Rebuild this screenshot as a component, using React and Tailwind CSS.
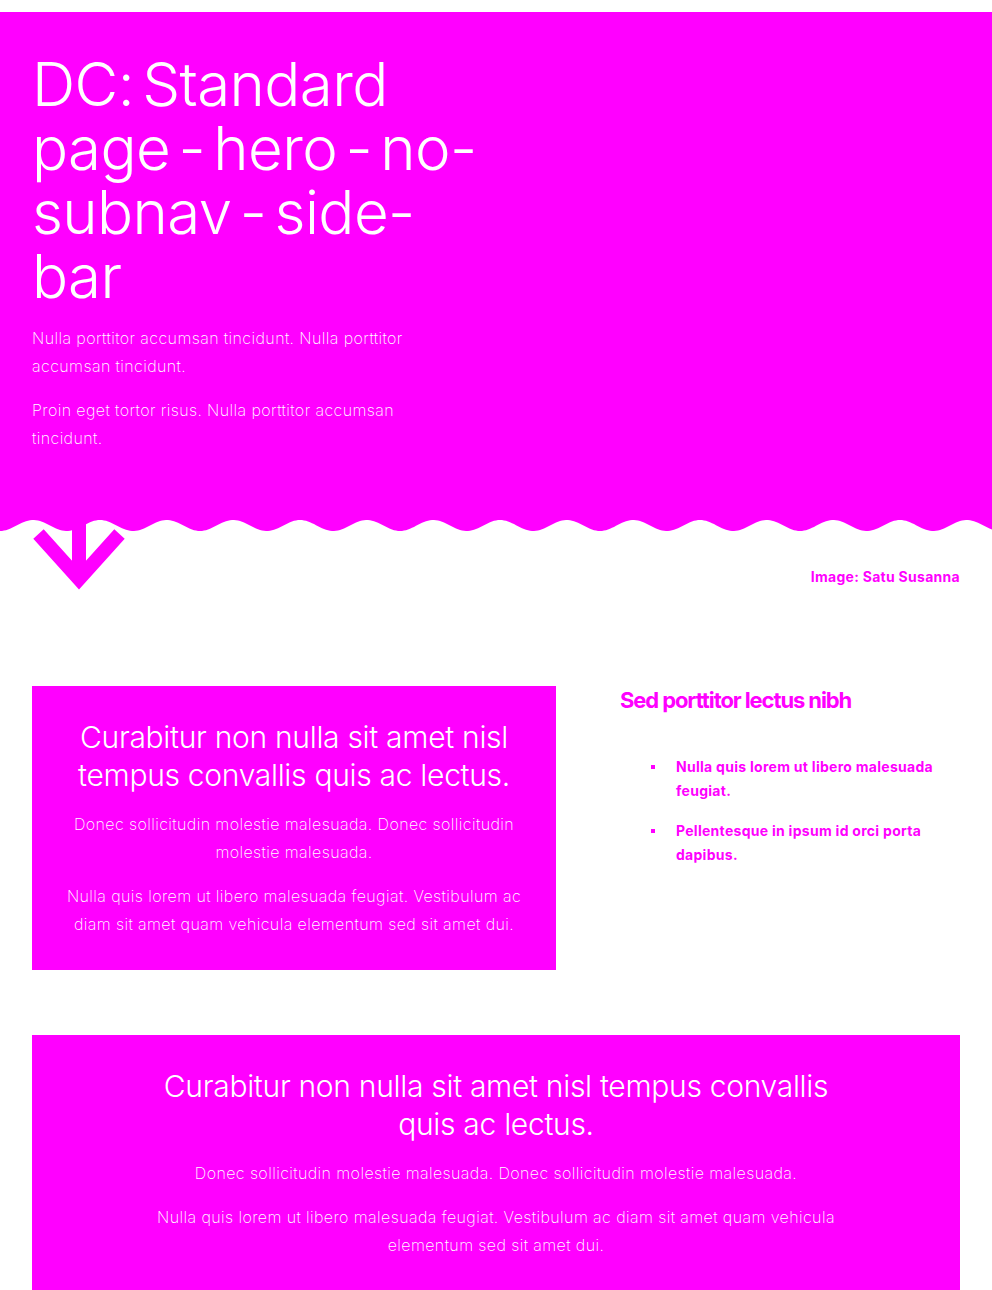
import React from "react";

const P = 66.67;
const A = 5.5;
function wavePath() {
  let d = "M0 0 L992 0";
  for (let x = 992; x >= 0; x -= 2) {
    const y = A + A * Math.cos((2 * Math.PI * x) / P);
    d += ` L${x} ${y.toFixed(2)}`;
  }
  d += " Z";
  return d;
}
const WAVE = wavePath();

function Arrow() {
  return (
    <svg
      className="absolute left-0 top-[-31px]"
      width="140"
      height="100"
      viewBox="0 0 140 100"
    >
      <line x1="79" y1="0" x2="79" y2="80" stroke="#ff00ff" strokeWidth="14" />
      <polyline
        points="38.5,34 79,79 119.5,34"
        fill="none"
        stroke="#ff00ff"
        strokeWidth="14"
        strokeLinejoin="miter"
        strokeMiterlimit="10"
      />
    </svg>
  );
}

function Card({ wide }) {
  return (
    <div className="bg-[#ff00ff] px-8 pt-8 pb-8 text-center text-white">
      <div className={wide ? "mx-auto max-w-[700px]" : ""}>
        <h2 className="text-[30px] leading-[38px] font-light tracking-[-0.01em]">
          Curabitur non nulla sit amet nisl tempus convallis quis ac lectus.
        </h2>
        <p className="mt-4 text-[16px] leading-[28px] font-extralight tracking-[0.025em]">
          Donec sollicitudin molestie malesuada. Donec sollicitudin molestie malesuada.
        </p>
        <p className="mt-4 text-[16px] leading-[28px] font-extralight tracking-[0.025em]">
          Nulla quis lorem ut libero malesuada feugiat. Vestibulum ac diam sit amet quam vehicula elementum sed sit amet dui.
        </p>
      </div>
    </div>
  );
}

export default function App() {
  return (
    <div className="min-h-[1290px] bg-white pt-3 font-['Inter','Liberation_Sans',sans-serif]">
      <header>
        <div className="bg-[#ff00ff] px-8 pt-10 pb-[68px]">
          <div className="text-white">
            <h1 className="w-[520px] whitespace-nowrap text-[60px] leading-[64px] font-light tracking-[-0.01em] [word-spacing:-8px]">
              DC: Standard
              <br />
              page - hero - no-
              <br />
              subnav - side-
              <br />
              bar
            </h1>
            <p className="mt-4 w-[420px] text-[16px] leading-[28px] font-extralight tracking-[0.025em]">
              Nulla porttitor accumsan tincidunt. Nulla porttitor accumsan tincidunt.
            </p>
            <p className="mt-4 w-[420px] text-[16px] leading-[28px] font-extralight tracking-[0.025em]">
              Proin eget tortor risus. Nulla porttitor accumsan tincidunt.
            </p>
          </div>
        </div>
        <svg className="block" width="992" height="11" viewBox="0 0 992 11">
          <path d={WAVE} fill="#ff00ff" />
        </svg>
        <div className="relative px-8 pt-9">
          <Arrow />
          <p className="text-right text-[14px] leading-[20px] font-bold tracking-[0.02em] text-[#ff00ff]">
            Image: Satu Susanna
          </p>
        </div>
      </header>

      <main className="px-8 pt-[99px]">
        <div className="grid grid-cols-[524px_340px] gap-16">
          <div>
            <Card />
          </div>
          <aside className="text-[#ff00ff]">
            <h3 className="text-[22px] leading-[28px] font-bold tracking-[-0.05em]">
              Sed porttitor lectus nibh
            </h3>
            <ul className="mt-[41px] flex flex-col gap-4 text-[14px] leading-[24px] font-bold tracking-[0.02em]">
              <li className="flex">
                <span className="mt-[10px] ml-[31px] mr-[21px] h-[4px] w-[4px] shrink-0 bg-[#ff00ff]" />
                <span>Nulla quis lorem ut libero malesuada feugiat.</span>
              </li>
              <li className="flex">
                <span className="mt-[10px] ml-[31px] mr-[21px] h-[4px] w-[4px] shrink-0 bg-[#ff00ff]" />
                <span>Pellentesque in ipsum id orci porta dapibus.</span>
              </li>
            </ul>
          </aside>
        </div>
        <div className="mt-[65px]">
          <Card wide />
        </div>
      </main>
    </div>
  );
}
